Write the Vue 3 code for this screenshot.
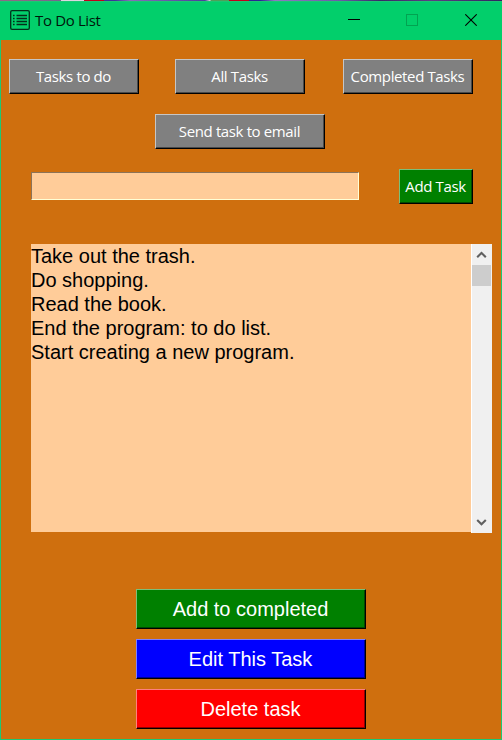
<script setup>
import { ref } from 'vue'

const filters = [
  { label: 'Tasks to do', cls: 'f1' },
  { label: 'All Tasks', cls: 'f2' },
  { label: 'Completed Tasks', cls: 'f3' },
]
const tasks = ref([
  'Take out the trash.',
  'Do shopping.',
  'Read the book.',
  'End the program: to do list.',
  'Start creating a new program.',
])
const actions = [
  { label: 'Add to completed', cls: 'green' },
  { label: 'Edit This Task', cls: 'blue' },
  { label: 'Delete task', cls: 'red' },
]
const draft = ref('')
</script>

<template>
  <div class="window">
    <div class="backdrop"></div>
    <header class="titlebar">
      <svg class="app-icon" width="20" height="20" viewBox="0 0 20 20">
        <rect x=".7" y=".7" width="18.6" height="18.6" rx="1.4" fill="none" stroke="#03301b" stroke-width="1.3" />
        <path d="M3 5.5h1.6M3 8.5h1.6M3 11.5h1.6M3 14.5h1.6M6.5 5.5H17M6.5 8.5H17M6.5 11.5H17M6.5 14.5H17" stroke="#03301b" stroke-width="1.3" />
      </svg>
      <span class="title">To Do List</span>
      <div class="controls">
        <svg width="12" height="12" viewBox="0 0 12 12"><path d="M0 5.5h12" stroke="#000" /></svg>
        <svg width="12" height="12" viewBox="0 0 12 12"><rect x=".5" y=".5" width="11" height="11" fill="none" stroke="#02a351" /></svg>
        <svg class="close" width="12" height="12" viewBox="0 0 12 12"><path d="M.3 .3L11.7 11.7M11.7 .3L.3 11.7" stroke="#000" stroke-width="1.1" /></svg>
      </div>
    </header>

    <main class="body">
      <nav class="filters">
        <button v-for="f in filters" :key="f.label" class="btn small" :class="f.cls"><span>{{ f.label }}</span></button>
      </nav>
      <div class="email-row">
        <button class="btn small email"><span>Send task to email</span></button>
      </div>
      <div class="entry-row">
        <input v-model="draft" class="entry" type="text" />
        <button class="btn small green add"><span>Add Task</span></button>
      </div>
      <div class="list-row">
        <ul class="list">
          <li v-for="t in tasks" :key="t">{{ t }}</li>
        </ul>
        <div class="scrollbar">
          <svg class="arrow" width="21" height="21" viewBox="0 0 21 21"><path d="M6.2 13.2L10.5 8.9L14.8 13.2" fill="none" stroke="#606060" stroke-width="2.1" /></svg>
          <div class="thumb"></div>
          <svg class="arrow down" width="21" height="21" viewBox="0 0 21 21"><path d="M6.2 7.9L10.5 12.2L14.8 7.9" fill="none" stroke="#606060" stroke-width="2.1" /></svg>
        </div>
      </div>
      <div class="actions">
        <button v-for="a in actions" :key="a.label" class="btn large" :class="a.cls"><span>{{ a.label }}</span></button>
      </div>
    </main>
  </div>
</template>

<style>
body { margin: 0; overflow: hidden; }
</style>

<style scoped>
* { box-sizing: border-box; }
.window {
  width: 502px;
  height: 740px;
  display: flex;
  flex-direction: column;
  background: #cf6f0e;
  overflow: hidden;
}
.backdrop {
  height: 1px;
  flex: none;
  background: linear-gradient(90deg, #8a6a86 0 20px, #75638f 61px, #dcd6e0 61px 84px, #c4001a 84px 104px, #3c3499 104px 115px, #8470b8 130px, #4a3f9c 205px, #d8d0dc 210px, #4f9f58 211px 229px, #c4001a 229px 249px, #2a2594 249px 260px, #8c7bc0 275px, #6b5aa8 340px, #352a66 380px, #5c3d84 430px, #2e2560 502px);
}
.titlebar {
  height: 39px;
  flex: none;
  display: flex;
  align-items: center;
  background: #02cf6b;
  border-top: 1px solid #1cc873;
  padding: 0 25px 2px 10px;
}
.title {
  margin-left: 5px;
  font: 15px/20px "Open Sans", "Noto Sans", sans-serif;
  letter-spacing: -0.35px;
  color: #00150a;
  white-space: nowrap;
}
.controls {
  margin-left: auto;
  display: flex;
  gap: 46px;
}
.close { margin-left: 1px; }
.controls svg, .app-icon { display: block; }
.body {
  flex: 1;
  border: solid #1cc873;
  border-width: 0 1px 1px 1px;
  padding: 19px 9px 0 8px;
}
.btn {
  display: flex;
  align-items: center;
  justify-content: center;
  flex: none;
  margin: 0;
  padding: 0 1px 0 0;
  color: #fff;
  background: #808080;
  border: 1px solid;
  border-color: #c6c6c6 #000 #000 #c6c6c6;
  box-shadow: inset -1px -1px #494949;
  white-space: nowrap;
}
.small {
  height: 35px;
  width: 130px;
  padding-bottom: 2px;
  font: 15px/20px "Open Sans", "Noto Sans", sans-serif;
  letter-spacing: -0.37px;
}
.large {
  height: 40px;
  width: 230px;
  font: 20px/24px "Liberation Sans", Arial, sans-serif;
}
.filters { display: flex; }
.f2 { margin-left: 36px; }
.f3 { margin-left: 38px; }
.email-row { padding: 20px 0 0 146px; }
.email { width: 170px; }
.entry-row {
  display: flex;
  align-items: flex-start;
  padding: 20px 0 0 22px;
}
.entry {
  width: 328px;
  height: 28px;
  margin: 3px 40px 0 0;
  padding: 0 4px;
  background: #ffcc99;
  border: 1px solid;
  border-color: #8c7358 #ffffd5 #ffffd5 #8c7358;
  border-radius: 0;
  outline: none;
  font: 16px "Liberation Sans", Arial, sans-serif;
}
.green { background: #008000; border-color: #7ac07a #000 #000 #7ac07a; box-shadow: inset -1px -1px #004a00; }
.blue { background: #0000ff; border-color: #7f7fff #000 #000 #7f7fff; box-shadow: inset -1px -1px #000092; }
.red { background: #ff0000; border-color: #ff7f7f #000 #000 #ff7f7f; box-shadow: inset -1px -1px #920000; }
.add { width: 74px; }
.list-row {
  display: flex;
  align-items: flex-start;
  padding: 40px 0 0 22px;
}
.list {
  width: 440px;
  height: 288px;
  margin: 0;
  padding: 0;
  list-style: none;
  background: #ffcc99;
  font: 20px/24px "Liberation Sans", Arial, sans-serif;
  color: #000;
}
.scrollbar {
  width: 21px;
  height: 289px;
  display: flex;
  flex-direction: column;
  background: #f0f0f0;
  border-left: 1px solid #fff;
}
.arrow { display: block; flex: none; margin-left: -1px; }
.thumb { height: 21px; width: 19px; background: #cdcdcd; }
.down { margin-top: auto; }
.actions {
  display: flex;
  flex-direction: column;
  gap: 10px;
  padding: 56px 0 0 127px;
}
</style>
